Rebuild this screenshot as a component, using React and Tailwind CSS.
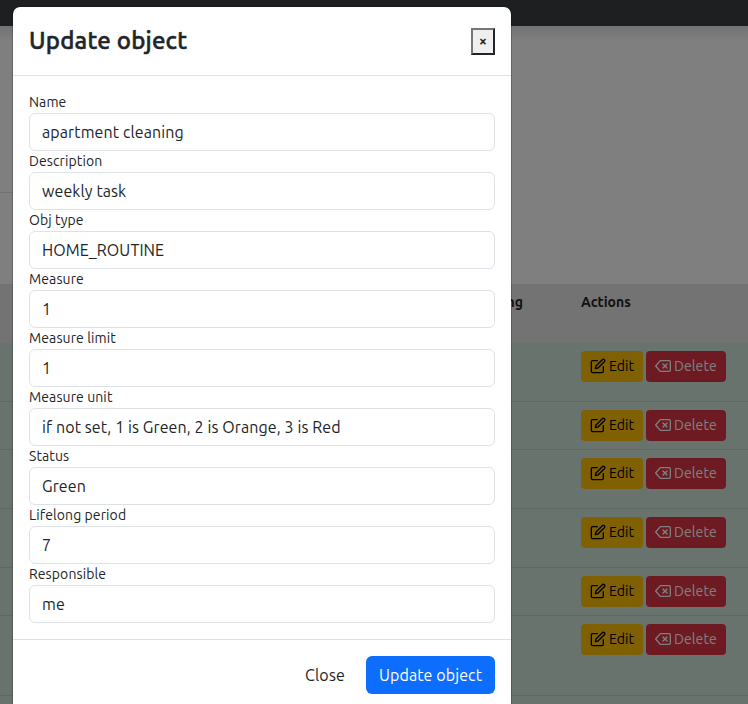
import { FiDelete, FiEdit } from "react-icons/fi";

const fields = [
  { label: "Name", value: "apartment cleaning" },
  { label: "Description", value: "weekly task" },
  { label: "Obj type", value: "HOME_ROUTINE" },
  { label: "Measure", value: "1" },
  { label: "Measure limit", value: "1" },
  { label: "Measure unit", value: "if not set, 1 is Green, 2 is Orange, 3 is Red" },
  { label: "Status", value: "Green" },
  { label: "Lifelong period", value: "7" },
  { label: "Responsible", value: "me" },
];

const rows = ["h-[59px]", "h-12", "h-[59px]", "h-[59px]", "h-12", "h-20", "h-12"];

function ActionRow({ height, empty }) {
  return (
    <div className={`${height} shrink-0 border-b border-[#bcd0c7] bg-[#d1e7dd] pl-[581px] pt-2`}>
      {!empty && (
        <div className="flex gap-[3px]">
          <button className="flex h-[31px] w-[62px] items-center gap-[3px] rounded bg-[#ffc107] pb-px pl-[9px] text-sm tracking-[0.1px] text-black">
            <FiEdit size={16} className="shrink-0" />
            <span>Edit</span>
          </button>
          <button className="flex h-[31px] w-20 items-center gap-[3px] rounded bg-[#dc3545] pb-px pl-[9px] text-sm tracking-[0.1px] text-white">
            <FiDelete size={16} className="shrink-0" />
            <span>Delete</span>
          </button>
        </div>
      )}
    </div>
  );
}

function ObjectsPage() {
  return (
    <div className="flex h-full flex-col bg-white">
      <div className="h-[26px] shrink-0 bg-[#3c3e42]" />
      <div className="h-4 shrink-0 bg-linear-to-b from-[#e2e9e5] to-white" />
      <div className="h-[151px] w-10 shrink-0 border-b border-[#dee2e6]" />
      <div className="h-[91px] shrink-0" />
      <div className="flex h-[59px] shrink-0 bg-[#e6e6e6] pt-2 text-sm leading-[21px] font-bold">
        <span className="w-[581px] pr-[58px] text-right">ng</span>
        <span>Actions</span>
      </div>
      {rows.map((height, i) => (
        <ActionRow key={i} height={height} empty={i === rows.length - 1} />
      ))}
    </div>
  );
}

function UpdateModal() {
  return (
    <div className="mt-1.5 ml-3 w-[500px] rounded-lg border border-black/20 bg-white bg-clip-padding tracking-[0.1px]">
      <div className="flex h-[69px] items-center justify-between border-b border-[#dee2e6] px-4">
        <h1 className="text-2xl font-medium tracking-[0.2px] [-webkit-text-stroke:0.5px_#212529]">Update object</h1>
        <button className="flex h-[27px] w-6 items-center justify-center border-2 border-t-[#767676] border-r-[#212529] border-b-[#212529] border-l-[#767676] bg-[#efefef] text-sm font-bold">
          ×
        </button>
      </div>
      <form className="p-4">
        {fields.map(({ label, value }) => (
          <label key={label} className="block">
            <span className="block h-[21px] text-sm leading-[21px]">{label}</span>
            <input
              className="block h-[38px] w-full rounded-md border border-[#dee2e6] bg-white px-3 text-base tracking-[0.1px]"
              defaultValue={value}
            />
          </label>
        ))}
      </form>
      <div className="flex justify-end gap-2 border-t border-[#dee2e6] p-4">
        <button className="h-[38px] w-[66px] rounded-md tracking-[0.2px]">Close</button>
        <button className="h-[38px] w-[129px] rounded-md bg-[#0d6efd] text-white">Update object</button>
      </div>
    </div>
  );
}

export default function App() {
  return (
    <div className="relative h-[704px] w-[748px] overflow-hidden font-[Ubuntu,'Noto_Sans',sans-serif] text-[#212529]">
      <ObjectsPage />
      <div className="absolute inset-0 bg-black/50" />
      <div className="absolute inset-0">
        <UpdateModal />
      </div>
    </div>
  );
}
